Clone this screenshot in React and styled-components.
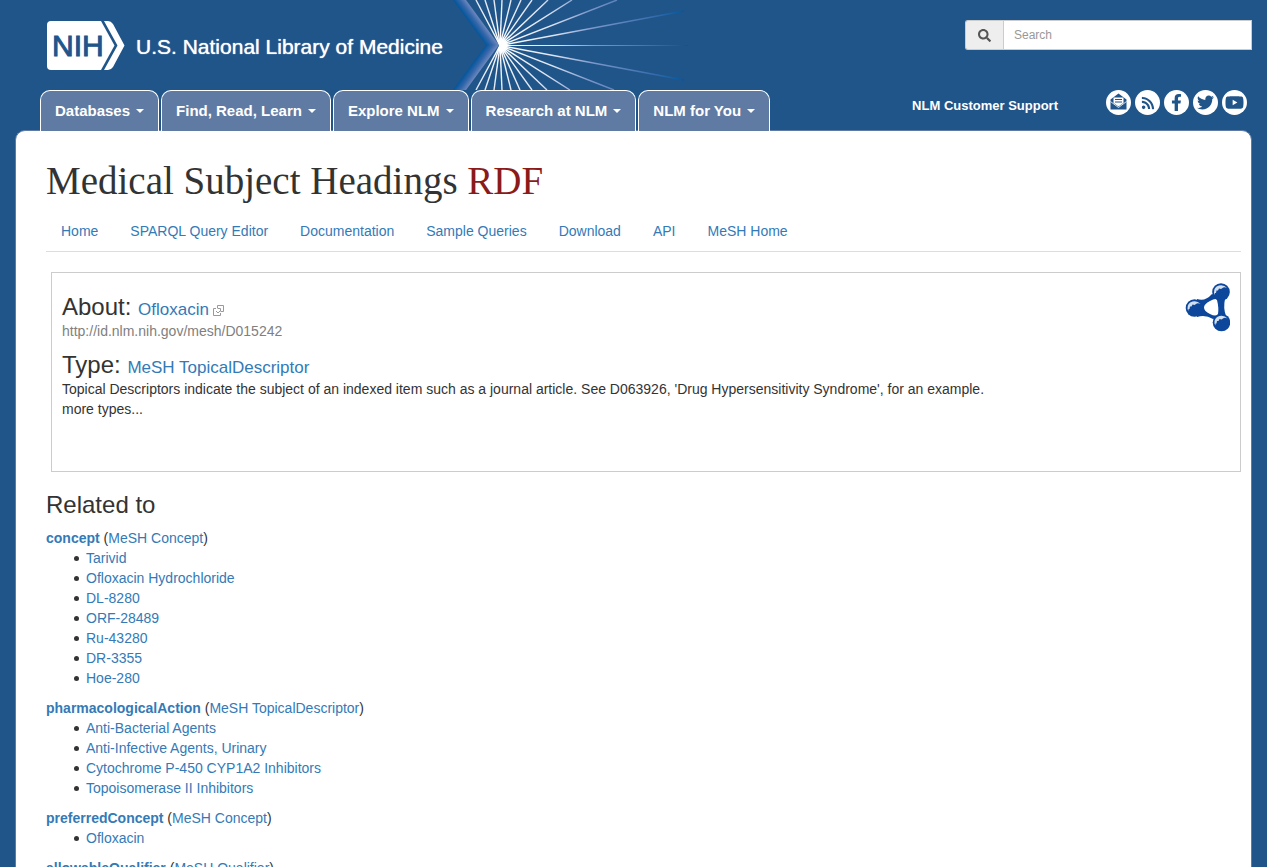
import React from "react";
import styled, { createGlobalStyle } from "styled-components";
import { FaSearch, FaRss, FaFacebookF, FaTwitter, FaYoutube } from "react-icons/fa";

const GlobalStyle = createGlobalStyle`
  *, *::before, *::after { box-sizing: border-box; }
  body {
    margin: 0;
    background: #20558a;
    color: #333;
    font-family: "Liberation Sans", Arial, Helvetica, sans-serif;
    font-size: 14px;
    line-height: 20px;
  }
  a { color: #337ab7; text-decoration: none; }
  a:hover { text-decoration: underline; }
`;

const Page = styled.div`
  padding: 0 15px;
`;

const Header = styled.header`
  position: relative;
  z-index: 1;
  display: flex;
  justify-content: space-between;
`;

const HeaderLeft = styled.div`
  display: flex;
  flex-direction: column;
`;

const HeaderRight = styled.div`
  display: flex;
  flex-direction: column;
  align-items: flex-end;
  gap: 40px;
  padding-top: 20px;
`;

const BrandRow = styled.div`
  display: flex;
  height: 90px;
  padding-left: 32px;
`;

const Brand = styled.a`
  display: flex;
  flex: 0 0 403px;
  align-items: center;
  gap: 11px;
  color: #fff;
  &:hover { text-decoration: none; }
`;

const BrandName = styled.span`
  padding-top: 4px;
  font-size: 21px;
  line-height: 24px;
  white-space: nowrap;
  text-shadow: 0 0 1px #fff;
`;

const Burst = styled.svg`
  flex: none;
  display: block;
`;

const Tabs = styled.nav`
  display: flex;
  gap: 2px;
  padding-left: 25px;
`;

const Tab = styled.button`
  display: flex;
  align-items: center;
  gap: 6px;
  height: 41px;
  padding: 0 14px;
  border: 1px solid #fff;
  border-bottom: 0;
  border-radius: 10px 10px 0 0;
  background: #5f7ba3;
  color: #fff;
  font: bold 15px/20px "Liberation Sans", Arial, sans-serif;
  white-space: nowrap;
  cursor: pointer;
`;

const Caret = styled.span`
  border: 4px solid transparent;
  border-top-color: #fff;
  border-bottom: 0;
`;

const SearchForm = styled.form`
  display: flex;
  width: 287px;
  height: 30px;
`;

const SearchButton = styled.button`
  display: flex;
  align-items: center;
  justify-content: center;
  width: 38px;
  padding: 0;
  border: 1px solid #ccc;
  border-right: 0;
  border-radius: 3px 0 0 3px;
  background: #eee;
  color: #555;
  font-size: 13px;
`;

const SearchInput = styled.input`
  flex: 1;
  min-width: 0;
  padding: 0 10px;
  border: 1px solid #ccc;
  border-radius: 0;
  background: #fff;
  font: 12px/18px "Liberation Sans", Arial, sans-serif;
  &::placeholder { color: #999; opacity: 1; }
`;

const Utility = styled.div`
  display: flex;
  align-items: center;
  gap: 48px;
  padding-right: 5px;
`;

const SupportLink = styled.a`
  padding-top: 6px;
  color: #fff;
  font-size: 13px;
  font-weight: bold;
  line-height: 18px;
  white-space: nowrap;
`;

const Socials = styled.div`
  display: flex;
  gap: 4px;
`;

const Social = styled.a`
  display: flex;
  align-items: center;
  justify-content: center;
  width: 25px;
  height: 25px;
  border-radius: 50%;
  background: #fff;
  color: #20558a;
  font-size: ${(p) => p.$size}px;
`;

const Panel = styled.main`
  margin-top: -1px;
  padding: 30px 10px 30px 30px;
  border: 1px solid #5f7ba3;
  border-radius: 10px 10px 0 0;
  background: #fff;
`;

const Title = styled.h1`
  margin: 0;
  font-family: Georgia, "Liberation Serif", serif;
  font-size: 39px;
  font-weight: normal;
  line-height: 40px;
`;

const Accent = styled.span`
  color: #8b1a1a;
`;

const SiteNav = styled.nav`
  display: flex;
  flex-wrap: wrap;
  gap: 32px;
  padding: 20px 15px 10px;
  border-bottom: 1px solid #ddd;
`;

const Summary = styled.section`
  display: flex;
  justify-content: space-between;
  align-items: flex-start;
  min-height: 200px;
  margin: 20px 0 0 5px;
  padding: 10px;
  border: 1px solid #ccc;
`;

const SummaryText = styled.div`
  padding-top: 10px;
`;

const Heading = styled.h2`
  margin: 0;
  font-size: 24px;
  font-weight: normal;
  line-height: 26px;
`;

const SummaryHeading = styled(Heading)`
  margin-top: ${(p) => (p.$spaced ? 10 : 0)}px;
  line-height: 28px;
  a { font-size: 17px; line-height: 20px; }
  svg { margin-left: 4px; vertical-align: -1px; }
`;

const Line = styled.div`
  color: ${(p) => (p.$muted ? "#808080" : "#333")};
`;

const Related = styled.section`
  padding-top: 20px;
`;

const Group = styled.section`
  margin-top: 10px;
`;

const ItemList = styled.ul`
  margin: 0;
  padding-left: 28px;
  list-style: none;
`;

const Item = styled.li`
  display: flex;
  align-items: center;
  gap: 7px;
  &::before {
    content: "";
    flex: none;
    width: 5px;
    height: 5px;
    border-radius: 50%;
    background: #333;
  }
`;

const NihLogo = () => (
  <svg width="78" height="49" viewBox="0 0 78 49" role="img" aria-label="NIH">
    <path fill="#fff" d="M4 0H54L67.500 24.500L54 49H4Q0 49 0 45V4Q0 0 4 0Z" />
    <path fill="#fff" d="M57 0H61Q64 0 66 3L77.500 24.500L66 46Q64 49 61 49H57L70.500 24.500Z" />
    <text
      x="5"
      y="35"
      fill="#20558a"
      stroke="#20558a"
      strokeWidth="1"
      fontFamily="Liberation Sans, Arial, sans-serif"
      fontSize="30"
    >
      NIH
    </text>
  </svg>
);

const RAYS = [
  [26, 0], [35, 0], [44, 0], [52, 0], [61, 0], [71, 0], [82, 0], [98, 0], [122, 0], [167, 0],
  [234, 11], [234, 80],
  [164, 90], [120, 90], [97, 90], [82, 90], [70, 90], [61, 90], [52, 90], [44, 90], [35, 90], [26, 90],
];

const SunBurst = () => (
  <Burst width="245" height="90" viewBox="0 0 245 90" aria-hidden="true">
    <defs>
      <radialGradient id="ray" gradientUnits="userSpaceOnUse" cx="50" cy="45" r="188">
        <stop offset="0" stopColor="#fff" />
        <stop offset="0.3" stopColor="#dde4f3" />
        <stop offset="0.5" stopColor="#7f98cb" />
        <stop offset="0.8" stopColor="#3f70b0" />
        <stop offset="1" stopColor="#00589f" />
      </radialGradient>
      <linearGradient id="bandTop" gradientUnits="userSpaceOnUse" x1="19" y1="22" x2="30" y2="14">
        <stop offset="0" stopColor="#00569c" />
        <stop offset="0.4" stopColor="#3566aa" />
        <stop offset="1" stopColor="#8d9dcb" />
      </linearGradient>
      <linearGradient id="bandBottom" gradientUnits="userSpaceOnUse" x1="19" y1="68" x2="30" y2="76">
        <stop offset="0" stopColor="#00569c" />
        <stop offset="0.4" stopColor="#3566aa" />
        <stop offset="1" stopColor="#8d9dcb" />
      </linearGradient>
      <radialGradient id="glow">
        <stop offset="0.5" stopColor="#fff" />
        <stop offset="1" stopColor="#fff" stopOpacity="0" />
      </radialGradient>
    </defs>
    <path d="M3 0H16L49 45H36Z" fill="url(#bandTop)" />
    <path d="M36 45H49L16 90H3Z" fill="url(#bandBottom)" />
    {RAYS.map(([x, y]) => (
      <path
        key={`${x}-${y}`}
        d={`M50 45.500L${x} ${y}`}
        stroke="url(#ray)"
        strokeWidth="1.4"
      />
    ))}
    <rect x="50" y="45" width="188" height="1" fill="url(#ray)" />
    <path d="M45 38L53 36L60 45.500L53 55L45 53L50 45.500Z" fill="url(#glow)" />
  </Burst>
);

const MailIcon = () => (
  <svg width="25" height="25" viewBox="0 0 25 25" fill="none" aria-hidden="true">
    <path d="M12.500 3.500L20.500 9.500V19.500H4.500V9.500Z" fill="#20558a" />
    <path d="M7.500 7.500H17.500V13L12.500 16.500L7.500 13Z" fill="#fff" />
    <path d="M9 9.500H16M9 12H16" stroke="#20558a" />
    <path d="M4.500 11.500L12.500 17.500L20.500 11.500" stroke="#fff" strokeWidth="0.8" />
  </svg>
);

const ExternalIcon = () => (
  <svg width="11" height="11" viewBox="0 0 11 11" fill="none" stroke="#999" aria-hidden="true">
    <path d="M4.500 3V0.500H10.500V6.500H8" />
    <path d="M3 3.500H0.500V10.500H7.500V8" />
    <path d="M3 6L5 8L8 5M4.500 3.500H7.500V6.500" />
  </svg>
);

const BALLS = [[36, 9], [9.500, 25], [36.500, 39.500]];

const RdfIcon = () => (
  <svg width="45" height="49" viewBox="0 0 45 49" role="img" aria-label="RDF">
    <path
      fill="#0c479c"
      fillRule="evenodd"
      d="M12 16Q20 19 27 11L40 16Q38 25 41 33L28 36Q20 31 12 34ZM19 24.500Q19 21 25 18Q31 14.500 32 17Q34 25 33 31Q31 34 25 31Q19 28 19 24.500Z"
    />
    {BALLS.map(([cx, cy]) => (
      <g key={`${cx}-${cy}`} transform={`translate(${cx} ${cy})`}>
        <circle r="8.800" fill="#0c479c" />
        <path
          fill="#d3e0f1"
          d="M-7 1Q-7.500 -5 -2 -6.500Q3 -7.500 6 -4Q3 -5.500 1.500 -4L0 -3L-2 -3.500L-3 -1.500L-4.500 -1.500L-5 1L-6 1L-6 3Z"
        />
      </g>
    ))}
  </svg>
);

const TABS = ["Databases", "Find, Read, Learn", "Explore NLM", "Research at NLM", "NLM for You"];

const SOCIALS = [
  ["Email updates", MailIcon, 25],
  ["RSS", FaRss, 14],
  ["Facebook", FaFacebookF, 17],
  ["Twitter", FaTwitter, 17],
  ["YouTube", FaYoutube, 19],
];

const LINKS = [
  "Home",
  "SPARQL Query Editor",
  "Documentation",
  "Sample Queries",
  "Download",
  "API",
  "MeSH Home",
];

const GROUPS = [
  {
    name: "concept",
    type: "MeSH Concept",
    items: ["Tarivid", "Ofloxacin Hydrochloride", "DL-8280", "ORF-28489", "Ru-43280", "DR-3355", "Hoe-280"],
  },
  {
    name: "pharmacologicalAction",
    type: "MeSH TopicalDescriptor",
    items: [
      "Anti-Bacterial Agents",
      "Anti-Infective Agents, Urinary",
      "Cytochrome P-450 CYP1A2 Inhibitors",
      "Topoisomerase II Inhibitors",
    ],
  },
  { name: "preferredConcept", type: "MeSH Concept", items: ["Ofloxacin"] },
  { name: "allowableQualifier", type: "MeSH Qualifier", items: [] },
];

export default function App() {
  return (
    <>
      <GlobalStyle />
      <Page>
        <Header>
          <HeaderLeft>
            <BrandRow>
              <Brand href="#">
                <NihLogo />
                <BrandName>U.S. National Library of Medicine</BrandName>
              </Brand>
              <SunBurst />
            </BrandRow>
            <Tabs aria-label="NLM">
              {TABS.map((t) => (
                <Tab key={t} type="button">
                  {t}
                  <Caret />
                </Tab>
              ))}
            </Tabs>
          </HeaderLeft>
          <HeaderRight>
            <SearchForm role="search">
              <SearchButton type="submit" aria-label="Submit search">
                <FaSearch />
              </SearchButton>
              <SearchInput type="text" placeholder="Search" aria-label="Search" />
            </SearchForm>
            <Utility>
              <SupportLink href="#">NLM Customer Support</SupportLink>
              <Socials>
                {SOCIALS.map(([label, Icon, size]) => (
                  <Social key={label} href="#" aria-label={label} $size={size}>
                    <Icon />
                  </Social>
                ))}
              </Socials>
            </Utility>
          </HeaderRight>
        </Header>
        <Panel>
          <Title>
            Medical Subject Headings <Accent>RDF</Accent>
          </Title>
          <SiteNav aria-label="MeSH RDF">
            {LINKS.map((l) => (
              <a key={l} href="#">{l}</a>
            ))}
          </SiteNav>
          <Summary>
            <SummaryText>
              <SummaryHeading>
                About: <a href="#">Ofloxacin<ExternalIcon /></a>
              </SummaryHeading>
              <Line $muted>http://id.nlm.nih.gov/mesh/D015242</Line>
              <SummaryHeading $spaced>
                Type: <a href="#">MeSH TopicalDescriptor</a>
              </SummaryHeading>
              <Line>
                Topical Descriptors indicate the subject of an indexed item such as a journal
                article. See D063926, 'Drug Hypersensitivity Syndrome', for an example.
              </Line>
              <Line>more types...</Line>
            </SummaryText>
            <RdfIcon />
          </Summary>
          <Related>
            <Heading>Related to</Heading>
            {GROUPS.map((g) => (
              <Group key={g.name}>
                <a href="#"><b>{g.name}</b></a> (<a href="#">{g.type}</a>)
                <ItemList>
                  {g.items.map((item) => (
                    <Item key={item}><a href="#">{item}</a></Item>
                  ))}
                </ItemList>
              </Group>
            ))}
          </Related>
        </Panel>
      </Page>
    </>
  );
}
